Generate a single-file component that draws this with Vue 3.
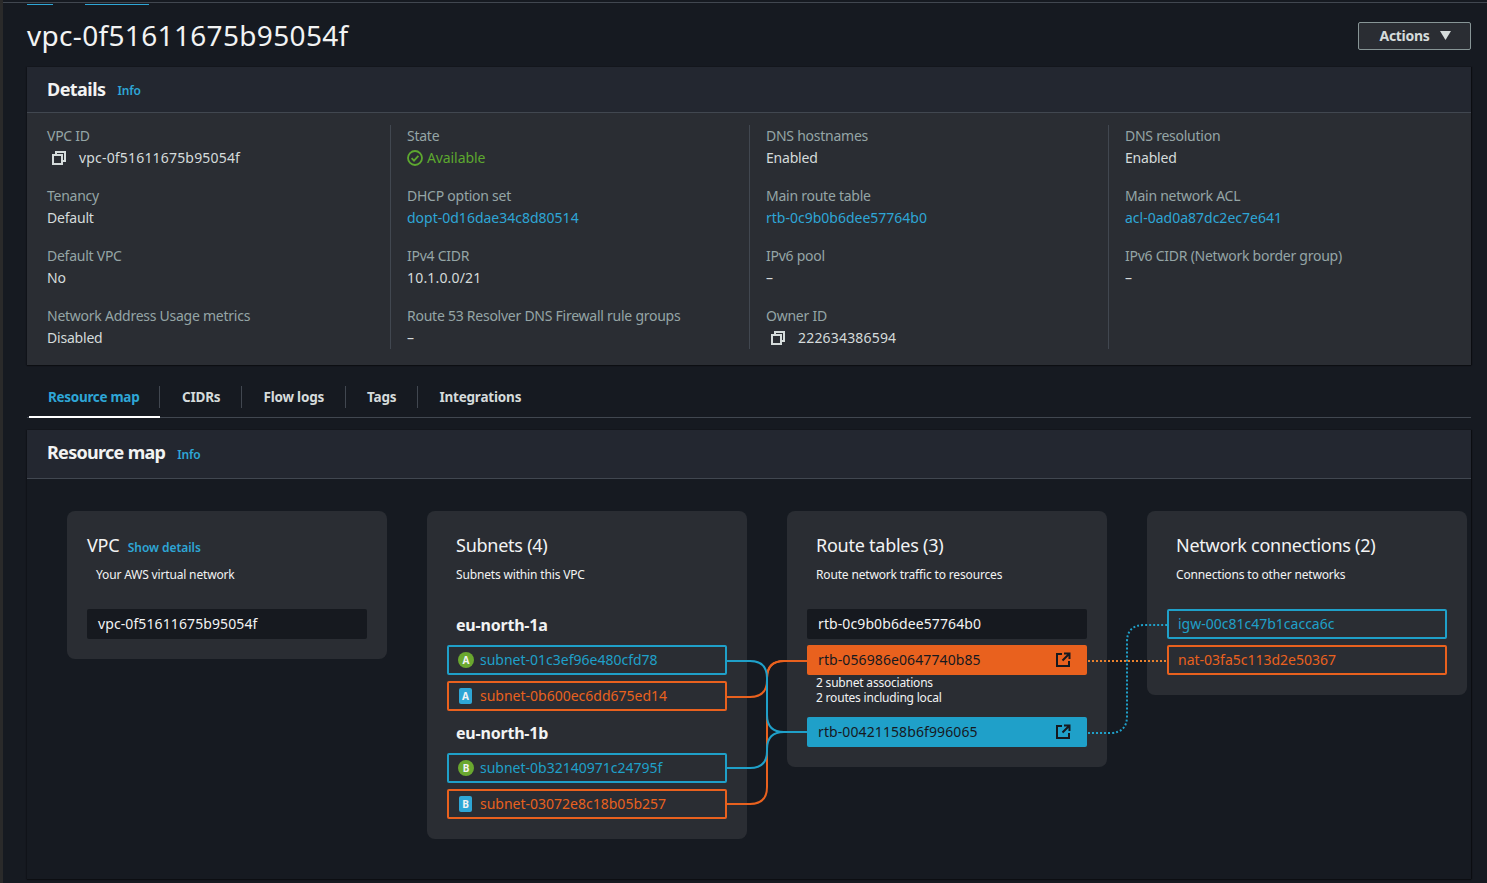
<template>
  <div class="page">
    <div class="topline"></div>
    <div class="crumbs">
      <span class="crumb crumb-a"></span>
      <span class="crumb crumb-b"></span>
    </div>
    <div class="head">
      <h1 class="title">vpc-0f51611675b95054f</h1>
      <button class="actions">
        <span class="actions-label">Actions</span>
        <svg width="11" height="9" viewBox="0 0 11 9"><path d="M0 0h11L5.5 9z" fill="#d5dbdb" /></svg>
      </button>
    </div>

    <section class="card">
      <div class="card-head">
        <h2>Details</h2>
        <a class="info">Info</a>
      </div>
      <div class="details">
        <div v-for="(col, i) in columns" :key="i" class="col">
          <div v-for="cell in col" :key="cell.key" class="cell">
            <div class="key">{{ cell.key }}</div>
            <div class="value" :class="cell.type">
              <svg v-if="cell.type === 'copy'" class="copy-icon" width="16" height="16" viewBox="0 0 16 16" fill="none" stroke="#d5dbdb" stroke-width="2">
                <path d="M5 4V2h9v9h-3" />
                <rect x="2" y="5" width="9" height="9" />
              </svg>
              <svg v-if="cell.type === 'ok'" class="ok-icon" width="16" height="16" viewBox="0 0 16 16" fill="none" stroke="#5da82f" stroke-width="1.8">
                <circle cx="8" cy="8" r="7" />
                <path d="M4.6 8.2l2.4 2.4 4.4-4.8" />
              </svg>
              {{ cell.value }}
            </div>
          </div>
        </div>
      </div>
    </section>

    <nav class="tabs">
      <a v-for="(tab, i) in tabs" :key="tab" class="tab" :class="{ active: i === 0 }">
        <span class="tab-label">{{ tab }}</span>
      </a>
    </nav>

    <section class="card map-card">
      <div class="card-head map-head">
        <h2>Resource map</h2>
        <a class="info">Info</a>
      </div>
      <div class="map">
        <div class="panel vpc-panel">
          <div class="panel-title">VPC <a class="show">Show details</a></div>
          <div class="panel-sub">Your AWS virtual network</div>
          <div class="item dark">vpc-0f51611675b95054f</div>
        </div>

        <div class="panel subnets-panel">
          <div class="panel-title">Subnets (4)</div>
          <div class="panel-sub">Subnets within this VPC</div>
          <div v-for="zone in zones" :key="zone.name" class="zone">
            <div class="zone-name">{{ zone.name }}</div>
            <div v-for="s in zone.subnets" :key="s.id" class="item" :class="s.color">
              <span class="badge" :class="s.shape">{{ zone.letter }}</span>
              {{ s.id }}
            </div>
          </div>
        </div>

        <div class="panel routes-panel">
          <div class="panel-title">Route tables (3)</div>
          <div class="panel-sub">Route network traffic to resources</div>
          <div class="item dark">rtb-0c9b0b6dee57764b0</div>
          <div class="item fill-orange">
            rtb-056986e0647740b85
            <svg class="ext" width="16" height="16" viewBox="0 0 16 16" fill="none" stroke="#16191f" stroke-width="2">
              <path d="M7 2H2v12h12V9" />
              <path d="M9 1.5h5.5V7M14 2L7.5 8.5" />
            </svg>
          </div>
          <div class="assoc">2 subnet associations<br />2 routes including local</div>
          <div class="item fill-blue">
            rtb-00421158b6f996065
            <svg class="ext" width="16" height="16" viewBox="0 0 16 16" fill="none" stroke="#16191f" stroke-width="2">
              <path d="M7 2H2v12h12V9" />
              <path d="M9 1.5h5.5V7M14 2L7.5 8.5" />
            </svg>
          </div>
        </div>

        <div class="panel network-panel">
          <div class="panel-title">Network connections (2)</div>
          <div class="panel-sub">Connections to other networks</div>
          <div class="item blue plain">igw-00c81c47b1cacca6c</div>
          <div class="item orange plain">nat-03fa5c113d2e50367</div>
        </div>

        <!-- connector lines, coordinates are page coordinates via the viewBox -->
        <svg class="links" width="1444" height="401" viewBox="27 479 1444 401" fill="none">
          <g stroke-width="2">
            <path stroke="#e9611e" d="M727 697H750Q767 697 767 680V678Q767 661 784 661H807" />
            <path stroke="#e9611e" d="M727 804H750Q767 804 767 787V678Q767 661 784 661H807" />
            <path stroke="#1fa0c9" d="M727 661H750Q767 661 767 678V715Q767 732 784 732H807" />
            <path stroke="#1fa0c9" d="M727 768H750Q767 768 767 751V749Q767 732 784 732H807" />
          </g>
          <g stroke-width="2" stroke-dasharray="2 2">
            <path stroke="#1fa0c9" d="M1088 733H1110Q1127 733 1127 716V642Q1127 625 1144 625H1167" />
            <path stroke="#e9812e" d="M1088 661H1167" />
          </g>
        </svg>
      </div>
    </section>
  </div>
</template>

<script setup>
const columns = [
  [
    { key: 'VPC ID', value: 'vpc-0f51611675b95054f', type: 'copy' },
    { key: 'Tenancy', value: 'Default' },
    { key: 'Default VPC', value: 'No' },
    { key: 'Network Address Usage metrics', value: 'Disabled' },
  ],
  [
    { key: 'State', value: 'Available', type: 'ok' },
    { key: 'DHCP option set', value: 'dopt-0d16dae34c8d80514', type: 'link' },
    { key: 'IPv4 CIDR', value: '10.1.0.0/21', type: 'num' },
    { key: 'Route 53 Resolver DNS Firewall rule groups', value: '–' },
  ],
  [
    { key: 'DNS hostnames', value: 'Enabled' },
    { key: 'Main route table', value: 'rtb-0c9b0b6dee57764b0', type: 'link' },
    { key: 'IPv6 pool', value: '–' },
    { key: 'Owner ID', value: '222634386594', type: 'copy' },
  ],
  [
    { key: 'DNS resolution', value: 'Enabled' },
    { key: 'Main network ACL', value: 'acl-0ad0a87dc2ec7e641', type: 'link' },
    { key: 'IPv6 CIDR (Network border group)', value: '–' },
  ],
];

const tabs = ['Resource map', 'CIDRs', 'Flow logs', 'Tags', 'Integrations'];

const zones = [
  {
    name: 'eu-north-1a',
    letter: 'A',
    subnets: [
      { id: 'subnet-01c3ef96e480cfd78', color: 'blue', shape: 'round' },
      { id: 'subnet-0b600ec6dd675ed14', color: 'orange', shape: 'square' },
    ],
  },
  {
    name: 'eu-north-1b',
    letter: 'B',
    subnets: [
      { id: 'subnet-0b32140971c24795f', color: 'blue', shape: 'round' },
      { id: 'subnet-03072e8c18b05b257', color: 'orange', shape: 'square' },
    ],
  },
];
</script>

<style>
html,
body {
  background: #161a21;
}
</style>

<style scoped>
.page {
  box-sizing: border-box;
  height: 883px;
  overflow: hidden;
  padding: 0 16px 0 24px;
  border-left: 3px solid #2a2a2a;
  background: #161a21;
  font-family: "Noto Sans", sans-serif;
  font-size: 14px;
  color: #d5dbdb;
}
.topline {
  height: 1px;
  margin: 2px -16px 0 -24px;
  background: #414750;
}
.crumbs {
  display: flex;
  height: 2px;
  align-items: flex-end;
}
.crumb {
  height: 1px;
  background: #2ea6d6;
}
.crumb-a {
  width: 26px;
}
.crumb-b {
  width: 64px;
  margin-left: 32px;
}
.head {
  display: flex;
  justify-content: space-between;
  height: 62px;
  padding-top: 17px;
  box-sizing: border-box;
}
.title {
  margin: -5px 0 0;
  font-size: 28px;
  line-height: 36px;
  font-weight: 400;
  letter-spacing: 0.33px;
  color: #f2f3f3;
}
.actions {
  width: 113px;
  height: 28px;
  padding: 0 0 2px 2px;
  display: flex;
  align-items: center;
  justify-content: center;
  gap: 11px;
  background: #2a2d33;
  border: 1px solid #879596;
  border-radius: 2px;
  color: #d5dbdb;
  font: 700 14px "Noto Sans", sans-serif;
}
.actions-label {
  letter-spacing: -0.3px;
}
.card {
  background: #2a2d33;
  box-shadow: 0 1px 1px #0c0e12, -1px 0 1px #12151b, 1px 0 1px #0c0e12;
}
.card-head {
  box-sizing: border-box;
  height: 46px;
  padding: 0 20px;
  display: flex;
  align-items: center;
  gap: 12px;
  background: #232730;
  border-bottom: 1px solid #414750;
}
.card-head h2 {
  margin: -2px 0 0;
  font-size: 18px;
  line-height: 24px;
  font-weight: 700;
  letter-spacing: -0.55px;
  color: #f2f3f3;
}
.info {
  margin-top: 2px;
  font-size: 12px;
  font-weight: 600;
  letter-spacing: -0.2px;
  color: #2ea6d6;
}
.details {
  height: 252px;
  box-sizing: border-box;
  padding: 12px 0 16px 20px;
  display: grid;
  grid-template-columns: 344px 359px 359px 1fr;
}
.col {
  display: flex;
  flex-direction: column;
  gap: 16px;
  border-right: 1px solid #414750;
}
.col + .col {
  padding-left: 16px;
}
.col:last-child {
  border-right: 0;
}
.cell {
  height: 44px;
  line-height: 22px;
  white-space: nowrap;
}
.key {
  letter-spacing: -0.25px;
  color: #95a5a6;
}
.value {
  display: flex;
  align-items: center;
  letter-spacing: -0.2px;
  color: #d5dbdb;
}
.value.link {
  letter-spacing: 0;
  color: #2ea6d6;
}
.value.copy,
.value.num {
  letter-spacing: 0.18px;
}
.value.ok {
  gap: 4px;
  letter-spacing: -0.1px;
  color: #5da82f;
}
.copy-icon {
  margin: 0 12px 0 4px;
}
.tabs {
  margin-top: 20px;
  height: 33px;
  box-sizing: border-box;
  display: flex;
  border-bottom: 1px solid #414750;
}
.tab {
  height: 32px;
  box-sizing: border-box;
  font-size: 13.5px;
  font-weight: 700;
  letter-spacing: -0.2px;
  color: #d5dbdb;
  white-space: nowrap;
}
.tab-label {
  display: block;
  height: 22px;
  line-height: 22px;
  margin-top: 1px;
  padding: 0 21px;
  border-right: 1px solid #414750;
}
.tab.active {
  height: 33px;
  width: 131px;
  margin: 0 1px 0 2px;
  border-bottom: 2px solid #fff;
  letter-spacing: -0.3px;
  color: #2ea6d6;
}
.tab.active .tab-label {
  padding-left: 19px;
  padding-right: 0;
}
.tab:last-child .tab-label {
  border-right: 0;
}
.map-card {
  margin-top: 12px;
  height: 449px;
  background: #161a21;
}
.map-head {
  height: 49px;
}
.map-head h2 {
  margin-top: -4px;
  letter-spacing: -0.7px;
}
.map-head .info {
  margin-top: 1px;
}
.map {
  position: relative;
  display: flex;
  align-items: flex-start;
  gap: 40px;
  padding: 32px 0 0 40px;
}
.panel {
  flex: none;
  box-sizing: border-box;
  width: 320px;
  padding: 20px;
  background: #2a2d33;
  border-radius: 8px;
}
.vpc-panel {
  height: 148px;
}
.subnets-panel {
  height: 328px;
}
.routes-panel {
  height: 256px;
}
.network-panel {
  height: 184px;
}
.panel-title {
  height: 30px;
  padding-left: 9px;
  font-size: 18px;
  line-height: 28px;
  letter-spacing: -0.25px;
  color: #f2f3f3;
}
.vpc-panel .panel-title {
  padding-left: 0;
}
.show {
  margin-left: 4px;
  font-size: 12px;
  font-weight: 600;
  letter-spacing: -0.05px;
  color: #2ea6d6;
}
.panel-sub {
  margin-top: 4px;
  height: 24px;
  padding-left: 9px;
  font-size: 12px;
  line-height: 20px;
  letter-spacing: -0.16px;
  color: #f2f3f3;
}
.item {
  box-sizing: border-box;
  height: 30px;
  margin-top: 6px;
  padding: 0 9px 1px;
  display: flex;
  align-items: center;
  border-radius: 2px;
  position: relative;
  white-space: nowrap;
}
.panel-sub + .item {
  margin-top: 20px;
}
.dark,
.fill-orange,
.fill-blue {
  padding-left: 11px;
  letter-spacing: 0.1px;
}
.dark {
  background: #16191f;
  color: #f2f3f3;
}
.blue {
  border: 2px solid #1fa0c9;
  color: #1fa0c9;
}
.orange {
  border: 2px solid #e9611e;
  color: #e9611e;
}
.fill-orange {
  background: #e9611e;
  color: #16191f;
}
.fill-blue {
  background: #1fa0c9;
  color: #16191f;
}
.ext {
  position: absolute;
  right: 16px;
  top: 7px;
}
.assoc {
  height: 42px;
  box-sizing: border-box;
  padding-left: 9px;
  font-size: 12px;
  line-height: 15px;
  letter-spacing: -0.2px;
  color: #f2f3f3;
}
.assoc + .item {
  margin-top: 0;
}
.zone-name {
  height: 30px;
  margin-top: 7px;
  padding-left: 9px;
  font-size: 16px;
  font-weight: 700;
  line-height: 30px;
  letter-spacing: -0.2px;
  color: #f2f3f3;
}
.panel-sub + .zone .zone-name {
  margin-top: 21px;
}
.zone-name + .item {
  margin-top: 5px;
}
.badge {
  flex: none;
  width: 16px;
  height: 16px;
  margin-right: 6px;
  display: flex;
  align-items: center;
  justify-content: center;
  font-size: 10px;
  font-weight: 700;
  color: #f2f3f3;
}
.badge.round {
  border-radius: 50%;
  background: #6aa82f;
}
.badge.square {
  width: 13px;
  margin: 0 8px 0 1px;
  border-radius: 2px;
  background: #2ea6d6;
}
.links {
  position: absolute;
  left: 0;
  top: 0;
  pointer-events: none;
}
</style>
